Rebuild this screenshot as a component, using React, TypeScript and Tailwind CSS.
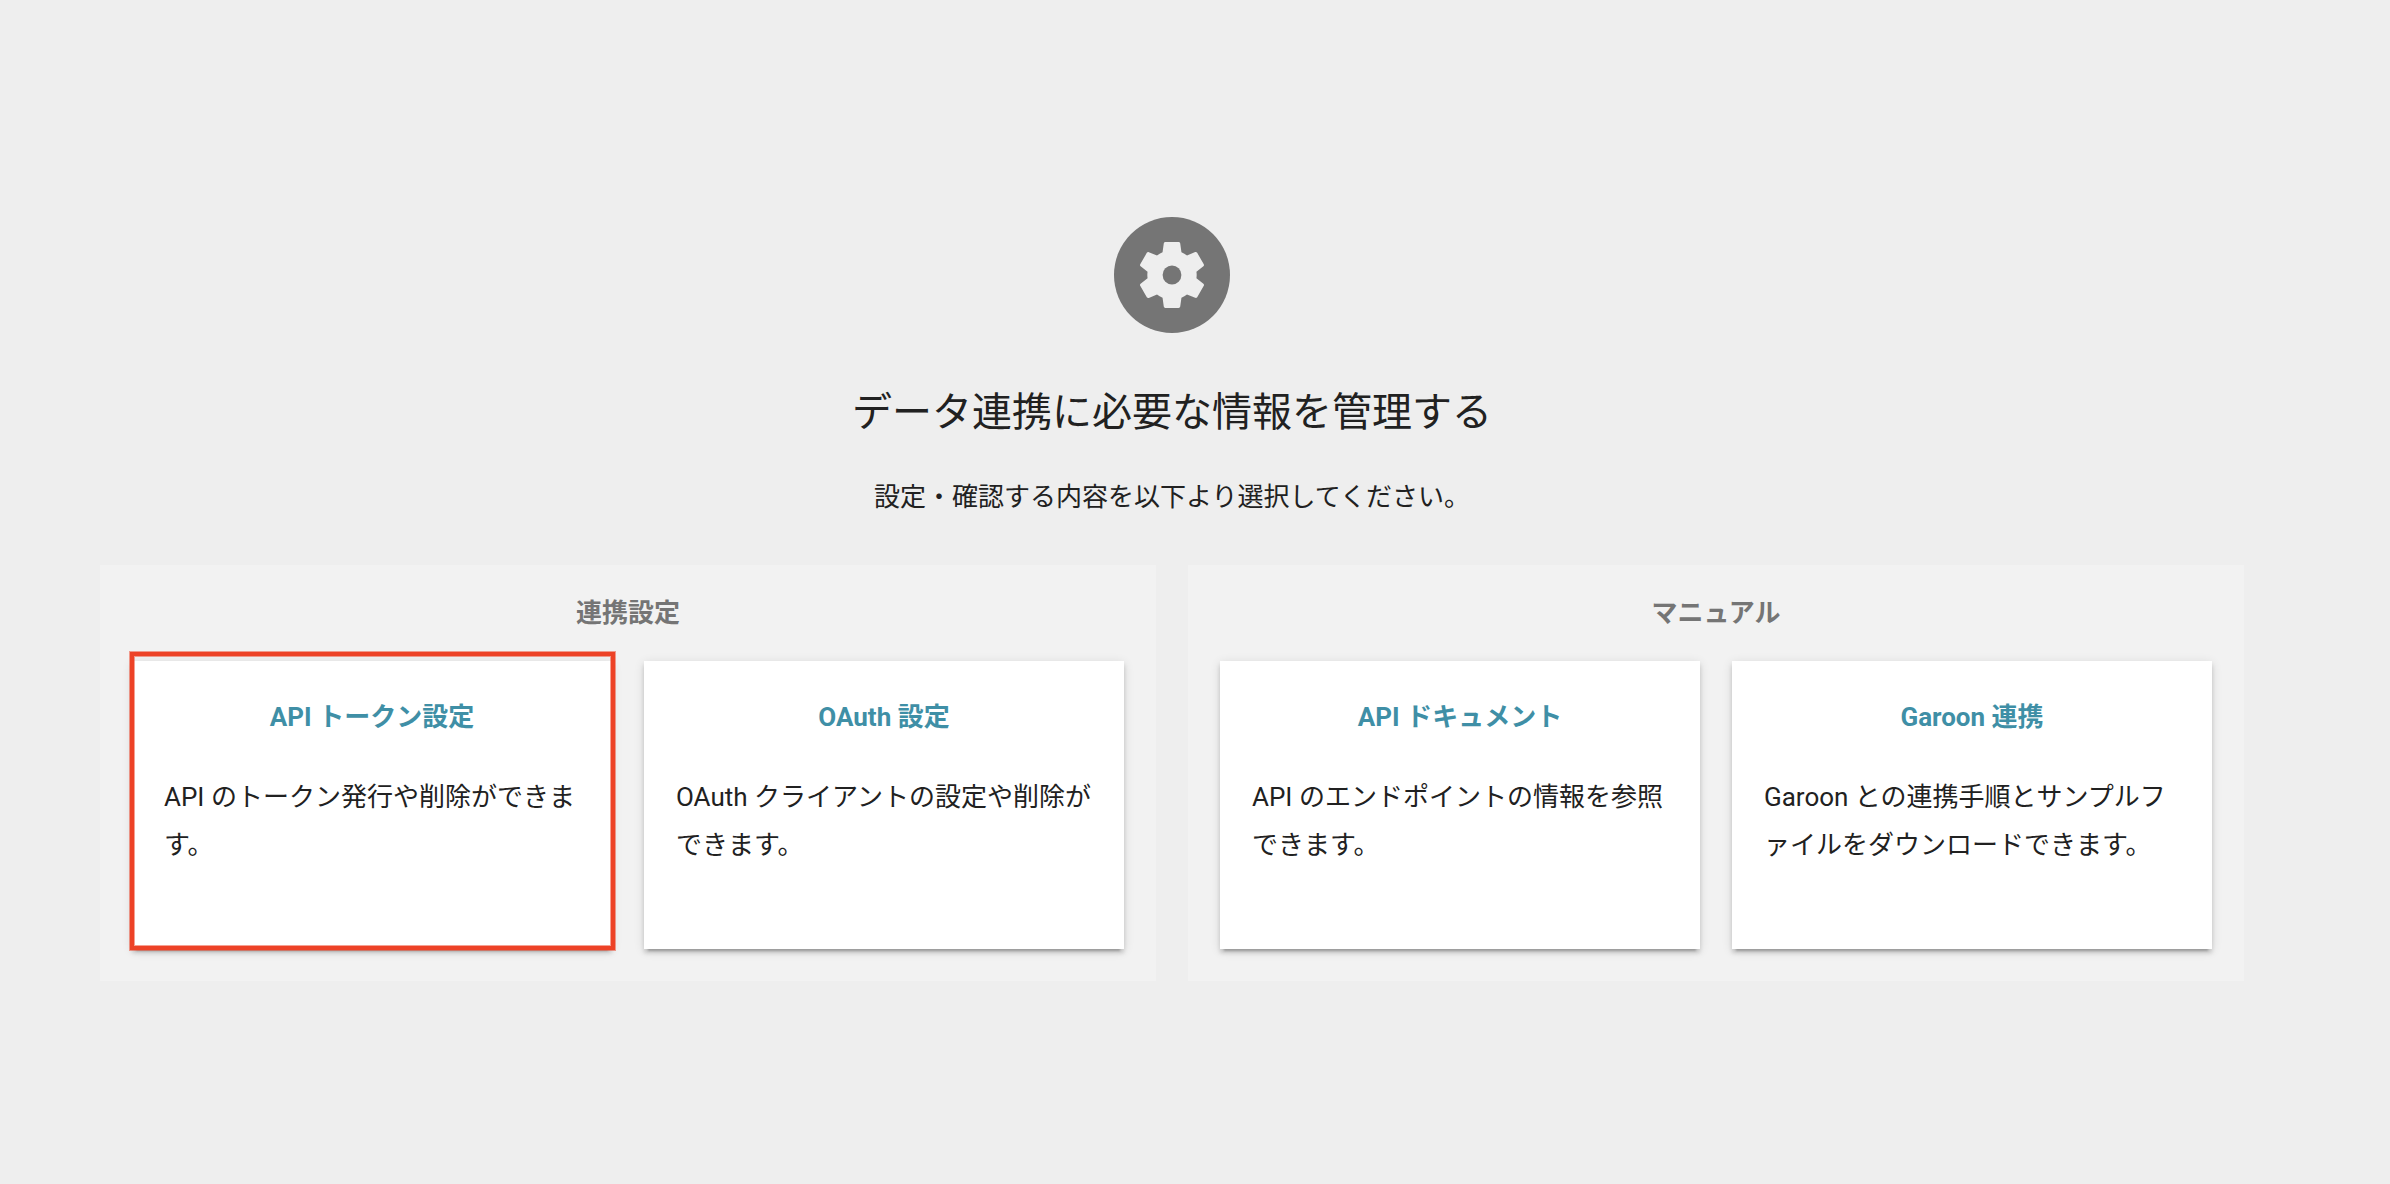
type MenuItem = {
  title: string;
  description: string;
  highlighted?: boolean;
};

type MenuSection = {
  label: string;
  items: MenuItem[];
};

const sections: MenuSection[] = [
  {
    label: "連携設定",
    items: [
      {
        title: "API トークン設定",
        description: "API のトークン発行や削除ができます。",
        highlighted: true,
      },
      {
        title: "OAuth 設定",
        description: "OAuth クライアントの設定や削除ができます。",
      },
    ],
  },
  {
    label: "マニュアル",
    items: [
      {
        title: "API ドキュメント",
        description: "API のエンドポイントの情報を参照できます。",
      },
      {
        title: "Garoon 連携",
        description: "Garoon との連携手順とサンプルファイルをダウンロードできます。",
      },
    ],
  },
];

function SettingsBadge() {
  return (
    <svg viewBox="0 0 116 116" className="size-29" aria-hidden="true">
      <circle cx="58" cy="58" r="58" fill="#757575" />
      <g transform="translate(58 58) scale(4.7) translate(-12 -12)">
        <path
          fill="#eeeeee"
          d="M17.25 12c0 .23-.02.46-.05.68l1.48 1.16c.13.11.17.3.08.45l-1.4 2.42c-.09.15-.27.21-.43.15l-1.74-.7c-.36.28-.76.51-1.18.69l-.26 1.85c-.03.17-.18.3-.35.3h-2.8c-.17 0-.32-.13-.35-.29l-.26-1.85c-.43-.18-.82-.41-1.18-.69l-1.74.7c-.16.06-.34 0-.43-.15l-1.4-2.42c-.09-.15-.05-.34.08-.45l1.48-1.16c-.03-.23-.05-.46-.05-.69 0-.23.02-.46.05-.68l-1.48-1.16c-.13-.11-.17-.3-.08-.45l1.4-2.42c.09-.15.27-.21.43-.15l1.74.7c.36-.28.76-.51 1.18-.69l.26-1.85c.03-.17.18-.3.35-.3h2.8c.17 0 .32.13.35.29l.26 1.85c.43.18.82.41 1.18.69l1.74-.7c.16-.06.34 0 .43.15l1.4 2.42c.09.15.05.34-.08.45l-1.48 1.16c.03.23.05.46.05.69z"
        />
        <circle cx="12" cy="12" r="2" fill="#757575" />
      </g>
    </svg>
  );
}

function MenuCard({ title, description, highlighted = false }: MenuItem) {
  return (
    <a
      href="#"
      className="relative block min-h-72 bg-white p-8 shadow-[0_6px_2px_-4px_rgba(0,0,0,0.2),0_4px_4px_0_rgba(0,0,0,0.14),0_2px_10px_0_rgba(0,0,0,0.12)]"
    >
      <h3 className="text-center font-bold text-[#3f8fa6]">{title}</h3>
      <p className="mt-8 [line-break:loose]">{description}</p>
      {highlighted && (
        <span className="pointer-events-none absolute -top-[9px] -right-[3px] -bottom-px -left-0.5 border-4 border-[#ed4226] shadow-[0_0_0_1px_rgba(237,66,38,0.5),inset_0_0_0_1px_rgba(237,66,38,0.5)]" />
      )}
    </a>
  );
}

export default function App() {
  return (
    <main className="min-h-screen bg-[#eeeeee] pt-[217px] pr-[146px] pb-12 pl-25 font-['Roboto','Noto_Sans_CJK_JP',sans-serif] text-[26px] leading-12 text-[#212121]">
      {/* Header */}
      <header className="flex flex-col items-center text-center">
        <SettingsBadge />
        <h1 className="mt-12 text-[40px] leading-16">データ連携に必要な情報を管理する</h1>
        <p className="mt-7">設定・確認する内容を以下より選択してください。</p>
      </header>

      {/* Sections */}
      <div className="mt-11 grid grid-cols-2 gap-8">
        {sections.map((section) => (
          <section key={section.label} className="bg-[#f2f2f2] px-8 pt-6 pb-8">
            <h2 className="text-center font-bold text-[#757575]">{section.label}</h2>
            <div className="mt-6 grid grid-cols-2 gap-8">
              {section.items.map((item) => (
                <MenuCard key={item.title} {...item} />
              ))}
            </div>
          </section>
        ))}
      </div>
    </main>
  );
}
